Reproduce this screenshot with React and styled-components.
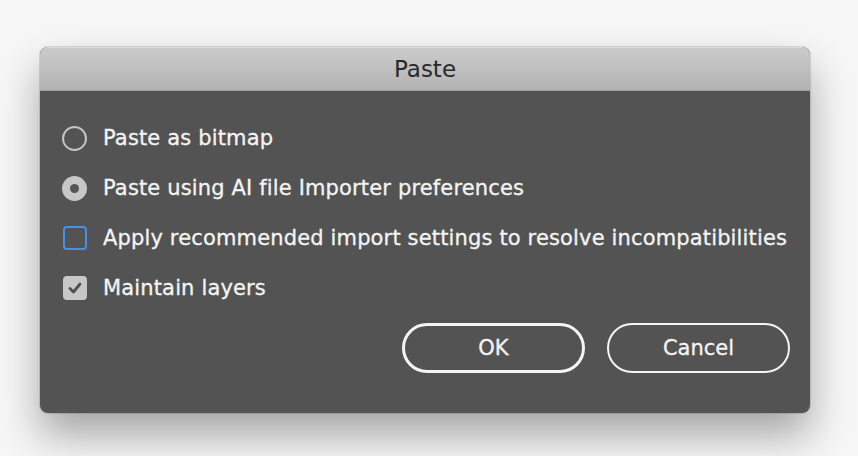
import React from "react";
import styled, { createGlobalStyle } from "styled-components";

const Global = createGlobalStyle`
  html, body { margin: 0; padding: 0; }
  body {
    width: 858px; height: 456px; overflow: hidden;
    background: #f6f6f6;
    font-family: "DejaVu Sans", "Open Sans", sans-serif;
  }
`;

const Page = styled.div`
  padding: 47px 48px 0 40px;
`;

const Dialog = styled.div`
  width: 770px;
  height: 366px;
  border-radius: 8px;
  background: #535353;
  box-shadow: 0 22px 40px rgba(0,0,0,0.33), 0 0 0 1px rgba(0,0,0,0.12);
  display: flex;
  flex-direction: column;
  overflow: hidden;
`;

const TitleBar = styled.div`
  height: 44px;
  box-sizing: border-box;
  flex: none;
  background: linear-gradient(#cbcbcb, #b3b3b3);
  border-top: 1px solid #dcdcdc;
  border-bottom: 1px solid #9c9c9c;
  display: flex;
  align-items: center;
  justify-content: center;
  color: #2a2a2a;
  font-size: 23px;
  padding-bottom: 1px;
`;

const Body = styled.div`
  padding: 22px 20px 0 22px;
  display: flex;
  flex-direction: column;
`;

const Row = styled.div`
  height: 50px;
  display: flex;
  align-items: center;
  gap: 16px;
  color: #f4f4f4;
  font-size: 21px;
  letter-spacing: 0.15px;
  -webkit-text-stroke: 0.3px #f4f4f4;
`;

const Radio = styled.span`
  width: 25px; height: 25px;
  box-sizing: border-box;
  border-radius: 50%;
  flex: none;
  border: ${p => (p.$checked ? "none" : "2px solid #c4c4c4")};
  background: ${p => (p.$checked ? "#c7c7c7" : "transparent")};
  display: flex; align-items: center; justify-content: center;
  &::after {
    content: "";
    display: ${p => (p.$checked ? "block" : "none")};
    width: 9px; height: 9px; border-radius: 50%;
    background: #555;
  }
`;

const Check = styled.span`
  width: 24px; height: 24px;
  box-sizing: border-box;
  border-radius: 4px;
  flex: none;
  margin-left: 1px;
  border: ${p => (p.$checked ? "none" : "2px solid #4a90e2")};
  background: ${p => (p.$checked ? "#c7c7c7" : "transparent")};
  display: flex; align-items: center; justify-content: center;
`;

const Buttons = styled.div`
  display: flex;
  justify-content: flex-end;
  gap: 22px;
  padding-top: 10px;
`;

const Button = styled.button`
  width: 183px;
  height: 50px;
  box-sizing: border-box;
  border-radius: 25px;
  background: transparent;
  border: ${p => (p.$default ? "3px" : "2px")} solid #f4f4f4;
  color: #f4f4f4;
  font-family: inherit;
  font-size: 21px;
  -webkit-text-stroke: 0.3px #f4f4f4;
  padding: 0;
`;

export default function App() {
  return (
    <>
      <Global />
      <Page>
        <Dialog>
          <TitleBar>Paste</TitleBar>
          <Body>
            <Row><Radio />Paste as bitmap</Row>
            <Row><Radio $checked />Paste using AI file Importer preferences</Row>
            <Row><Check />Apply recommended import settings to resolve incompatibilities</Row>
            <Row>
              <Check $checked>
                <svg width="18" height="18" viewBox="0 0 18 18">
                  <path d="M4 9.5 L7.5 13 L14 5" fill="none" stroke="#4e4e4e" strokeWidth="2.8" strokeLinecap="round" strokeLinejoin="round" />
                </svg>
              </Check>
              Maintain layers
            </Row>
            <Buttons>
              <Button $default>OK</Button>
              <Button>Cancel</Button>
            </Buttons>
          </Body>
        </Dialog>
      </Page>
    </>
  );
}
